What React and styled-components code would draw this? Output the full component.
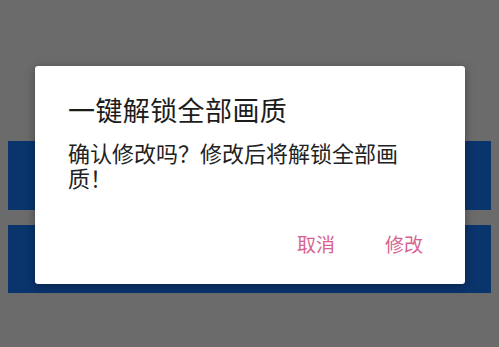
import styled, { createGlobalStyle } from "styled-components";

const Global = createGlobalStyle`
  html, body {
    margin: 0;
    padding: 0;
    background: #6b6b6b;
  }
  body {
    font-family: "Noto Sans CJK SC", "Noto Sans", sans-serif;
  }
`;

const Screen = styled.div`
  position: relative;
  width: 499px;
  height: 347px;
  background: #6b6b6b;
  overflow: hidden;
`;

const Bars = styled.div`
  display: flex;
  flex-direction: column;
  gap: 15px;
  padding: 141px 8px 0 8px;
`;

const Bar = styled.div`
  height: ${(p) => p.h}px;
  background: #0a346c;
`;

const Dialog = styled.div`
  position: absolute;
  left: 35px;
  top: 66px;
  width: 430px;
  height: 218px;
  box-sizing: border-box;
  background: #ffffff;
  border-radius: 3px;
  box-shadow: 0 2px 10px rgba(0, 0, 0, 0.35);
  padding: 26px 0 0 33px;
  display: flex;
  flex-direction: column;
`;

const Title = styled.h2`
  margin: 0;
  font-size: 27px;
  font-weight: 400;
  line-height: 36px;
  color: #1c1c1c;
  letter-spacing: 0.4px;
`;

const Message = styled.p`
  margin: 12px 0 0 0;
  width: 345px;
  font-size: 22px;
  line-height: 25px;
  color: #222222;
`;

const Actions = styled.div`
  display: flex;
  justify-content: flex-end;
  gap: 50px;
  padding-right: 42px;
  margin-top: 43px;
`;

const ActionButton = styled.button`
  border: none;
  background: none;
  padding: 0;
  font-family: inherit;
  font-size: 19px;
  line-height: 22px;
  color: #d8638f;
  cursor: pointer;
`;

export default function App() {
  return (
    <>
      <Global />
      <Screen>
        <Bars>
          <Bar h={69} />
          <Bar h={68} />
        </Bars>
        <Dialog>
          <Title>一键解锁全部画质</Title>
          <Message>确认修改吗？修改后将解锁全部画质！</Message>
          <Actions>
            <ActionButton>取消</ActionButton>
            <ActionButton>修改</ActionButton>
          </Actions>
        </Dialog>
      </Screen>
    </>
  );
}
